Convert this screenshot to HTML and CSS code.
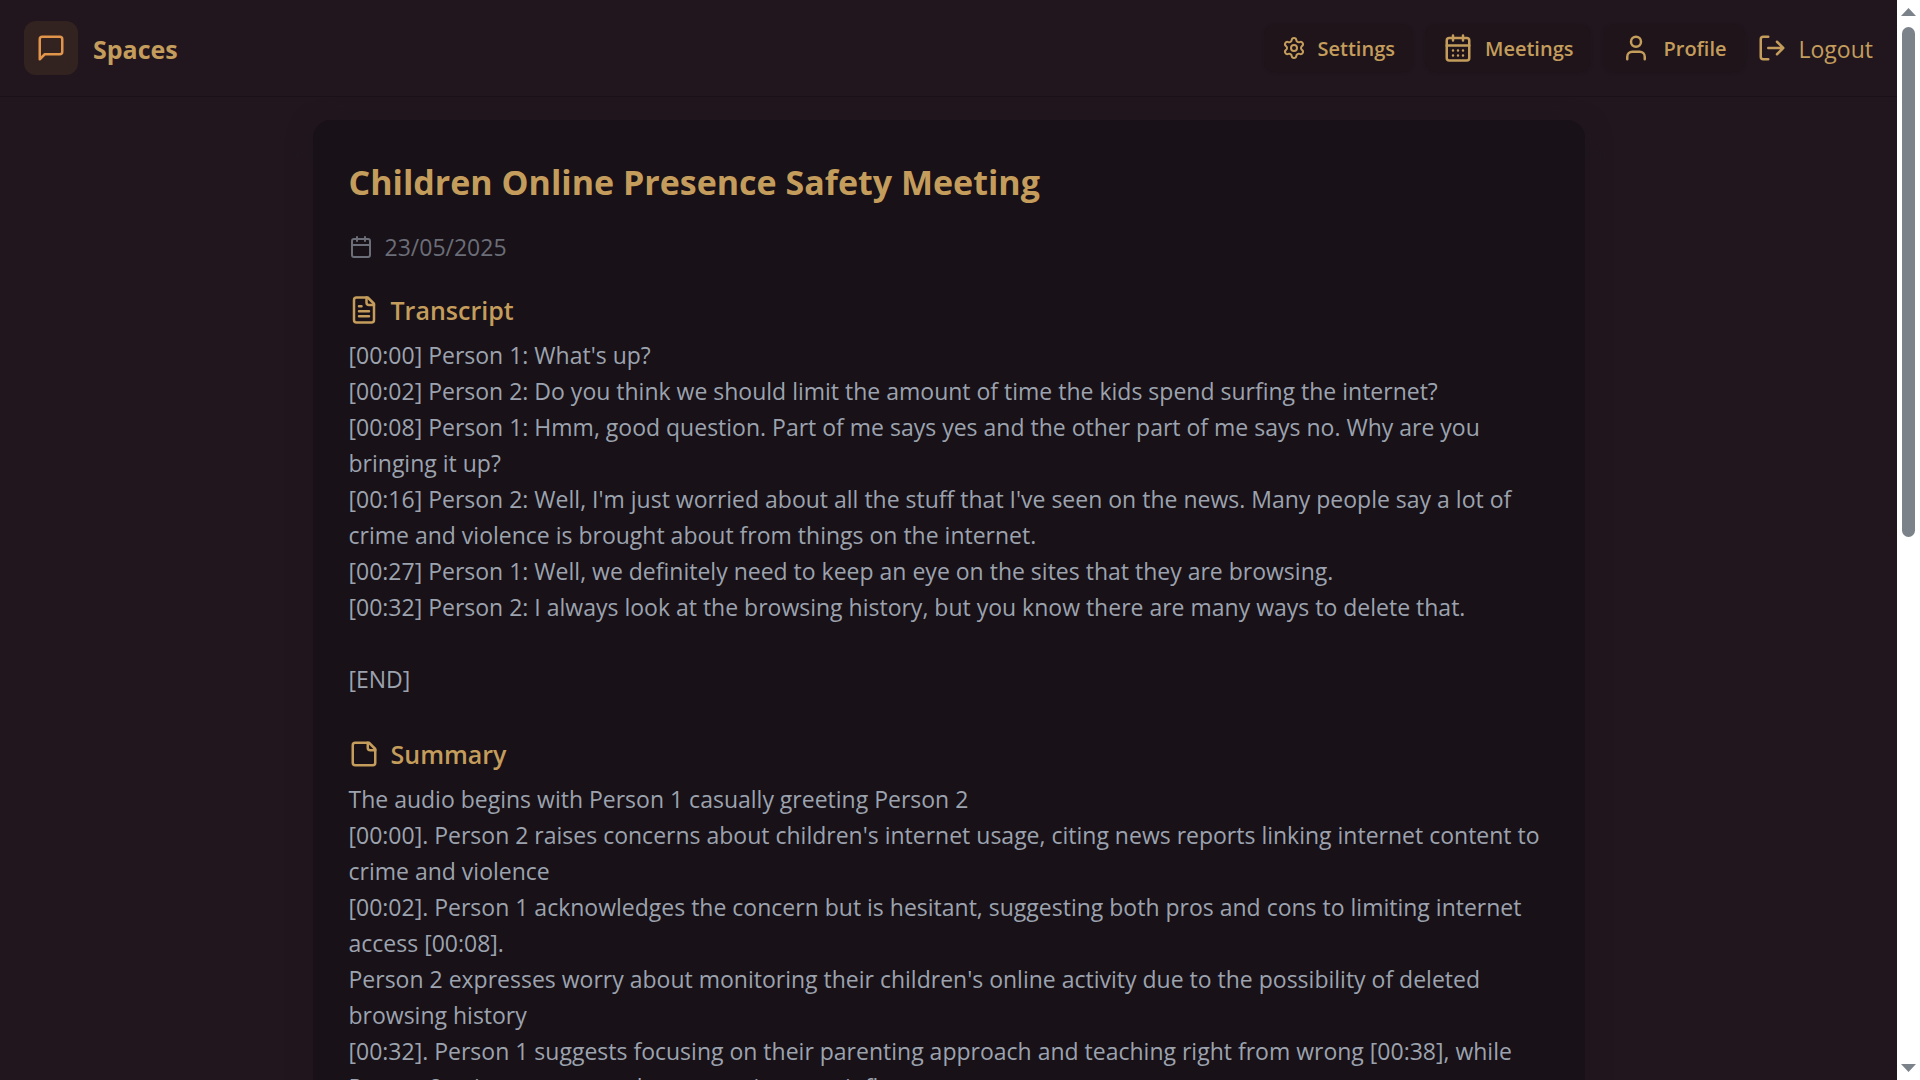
FILE: index.html
```html
<!DOCTYPE html>
<html lang="en">
<head>
<meta charset="utf-8">
<title>Children Online Presence Safety Meeting - Spaces</title>
<link rel="stylesheet" href="styles.css">
</head>
<body>
<div class="viewport">
  <div class="page">
    <header class="topbar">
      <a class="brand" href="#">
        <span class="brand-tile">
          <svg class="icon icon-lg" viewBox="0 0 24 24"><path d="M21 15a2 2 0 0 1-2 2H7l-4 4V5a2 2 0 0 1 2-2h14a2 2 0 0 1 2 2z"/></svg>
        </span>
        <span class="brand-name label">Spaces</span>
      </a>
      <nav class="nav">
        <a class="nav-link" href="#">
          <svg class="icon" viewBox="0 0 24 24"><path d="M9.671 4.136a2.34 2.34 0 0 1 4.659 0 2.34 2.34 0 0 0 3.319 1.915 2.34 2.34 0 0 1 2.33 4.033 2.34 2.34 0 0 0 0 3.831 2.34 2.34 0 0 1-2.33 4.033 2.34 2.34 0 0 0-3.319 1.915 2.34 2.34 0 0 1-4.659 0 2.34 2.34 0 0 0-3.32-1.915 2.34 2.34 0 0 1-2.33-4.033 2.34 2.34 0 0 0 0-3.831A2.34 2.34 0 0 1 6.35 6.051a2.34 2.34 0 0 0 3.319-1.915"/><circle cx="12" cy="12" r="3"/></svg>
          <span class="label">Settings</span>
        </a>
        <a class="nav-link" href="#">
          <svg class="icon icon-lg" viewBox="0 0 24 24"><path d="M8 2v4M16 2v4M3 10h18M8 14h.01M12 14h.01M16 14h.01M8 18h.01M12 18h.01M16 18h.01"/><rect x="3" y="4" width="18" height="18" rx="2"/></svg>
          <span class="label">Meetings</span>
        </a>
        <a class="nav-link" href="#">
          <svg class="icon icon-lg" viewBox="0 0 24 24"><path d="M19 21v-2a4 4 0 0 0-4-4H9a4 4 0 0 0-4 4v2"/><circle cx="12" cy="7" r="4"/></svg>
          <span class="label">Profile</span>
        </a>
        <button class="logout" type="button">
          <svg class="icon icon-lg" viewBox="0 0 24 24"><path d="M9 21H5a2 2 0 0 1-2-2V5a2 2 0 0 1 2-2h4M16 17l5-5-5-5M21 12H9"/></svg>
          <span class="label">Logout</span>
        </button>
      </nav>
    </header>
    <main class="content">
      <article class="card">
        <h1 class="title">Children Online Presence Safety Meeting</h1>
        <p class="date">
          <svg class="icon" viewBox="0 0 24 24"><path d="M8 2v4M16 2v4M3 10h18"/><rect x="3" y="4" width="18" height="18" rx="2"/></svg>
          <time datetime="2025-05-23">23/05/2025</time>
        </p>
        <section class="section">
          <h2 class="section-title">
            <svg class="icon icon-lg" viewBox="0 0 24 24"><path d="M15 2H6a2 2 0 0 0-2 2v16a2 2 0 0 0 2 2h12a2 2 0 0 0 2-2V7Z"/><path d="M14 2v4a2 2 0 0 0 2 2h4M10 9H8M16 13H8M16 17H8"/></svg>
            <span>Transcript</span>
          </h2>
          <p class="text">[00:00] Person 1: What's up?
[00:02] Person 2: Do you think we should limit the amount of time the kids spend surfing the internet?
[00:08] Person 1: Hmm, good question. Part of me says yes and the other part of me says no. Why are you bringing it up?
[00:16] Person 2: Well, I'm just worried about all the stuff that I've seen on the news. Many people say a lot of crime and violence is brought about from things on the internet.
[00:27] Person 1: Well, we definitely need to keep an eye on the sites that they are browsing.
[00:32] Person 2: I always look at the browsing history, but you know there are many ways to delete that.

[END]</p>
        </section>
        <section class="section">
          <h2 class="section-title">
            <svg class="icon icon-lg" viewBox="0 0 24 24"><path d="M16 3H5a2 2 0 0 0-2 2v14a2 2 0 0 0 2 2h14a2 2 0 0 0 2-2V8Z"/><path d="M15 3v4a2 2 0 0 0 2 2h4"/></svg>
            <span>Summary</span>
          </h2>
          <p class="text">The audio begins with Person 1 casually greeting Person 2
[00:00]. Person 2 raises concerns about children's internet usage, citing news reports linking internet content to crime and violence
[00:02]. Person 1 acknowledges the concern but is hesitant, suggesting both pros and cons to limiting internet access [00:08].
Person 2 expresses worry about monitoring their children's online activity due to the possibility of deleted browsing history
[00:32]. Person 1 suggests focusing on their parenting approach and teaching right from wrong [00:38], while Person 2 voices concerns about negative peer influence</p>
        </section>
      </article>
    </main>
  </div>
  <div class="scrollbar" aria-hidden="true">
    <svg class="arrow" viewBox="0 0 15 8"><path d="M7.5 0L15 8H0z"/></svg>
    <div class="track"><div class="thumb"></div></div>
    <svg class="arrow" viewBox="0 0 15 8"><path d="M0 0h15L7.5 8z"/></svg>
  </div>
</div>
</body>
</html>
```
FILE: styles.css
```css
* { box-sizing: border-box; }

body {
  margin: 0;
  background: #21161e;
  color: #9ca3af;
  font-family: "Open Sans", "Noto Sans", sans-serif;
  font-size: 23px;
  line-height: 36px;
}

h1, h2, p { margin: 0; }

.viewport {
  display: flex;
  height: 100vh;
  overflow: hidden;
}

.page {
  flex: 1;
  min-width: 0;
  overflow: hidden;
}

.icon {
  flex: none;
  width: 24px;
  height: 24px;
  fill: none;
  stroke: currentColor;
  stroke-width: 2;
  stroke-linecap: round;
  stroke-linejoin: round;
}

.icon-lg {
  width: 30px;
  height: 30px;
}

.topbar {
  display: flex;
  align-items: center;
  justify-content: space-between;
  height: 97px;
  padding: 0 24px;
  border-bottom: 1px solid #191117;
  color: #c49d5c;
}

.label { padding-top: 2px; }

.brand {
  display: flex;
  align-items: center;
  gap: 15px;
  color: inherit;
  text-decoration: none;
}

.brand-tile {
  display: flex;
  padding: 12px;
  border-radius: 12px;
  background: #322320;
  color: #e0954a;
}

.brand-name {
  font-size: 25px;
  font-weight: 700;
}

.nav {
  display: flex;
  align-items: center;
  gap: 12px;
}

.nav-link {
  display: flex;
  align-items: center;
  gap: 12px;
  height: 48px;
  padding: 0 18px;
  border-radius: 12px;
  background: #1e141a;
  box-shadow: 0 1px 3px #1e141a;
  color: inherit;
  font-size: 20px;
  font-weight: 600;
  text-decoration: none;
}

.logout {
  display: flex;
  align-items: center;
  gap: 12px;
  padding: 0;
  border: 0;
  background: none;
  color: inherit;
  font: inherit;
}

.content { padding: 23px 24px; }

.card {
  max-width: 1272px;
  margin: 0 auto;
  padding: 36px;
  border-radius: 18px;
  background: #181117;
  box-shadow: 0 6px 24px #1f161c;
}

.title {
  margin-bottom: 21px;
  color: #c49d5c;
  font-size: 34px;
  font-weight: 700;
  line-height: 52px;
}

.date {
  display: flex;
  align-items: center;
  gap: 12px;
  margin-bottom: 26px;
  color: #6b6e78;
}

.section { margin-bottom: 38px; }

.section-title {
  display: flex;
  align-items: center;
  gap: 12px;
  margin-bottom: 8px;
  color: #c49d5c;
  font-size: 25px;
  font-weight: 600;
  line-height: 38px;
}

.text { white-space: pre-line; }

.scrollbar {
  display: flex;
  flex-direction: column;
  align-items: center;
  gap: 11px;
  width: 23px;
  padding: 8px 0;
  background: #fff;
}

.arrow {
  flex: none;
  width: 15px;
  height: 8px;
  fill: #7b828a;
}

.track {
  flex: 1;
  width: 13px;
}

.thumb {
  height: 49.7%;
  border-radius: 7px;
  background: #7b828a;
}
```
